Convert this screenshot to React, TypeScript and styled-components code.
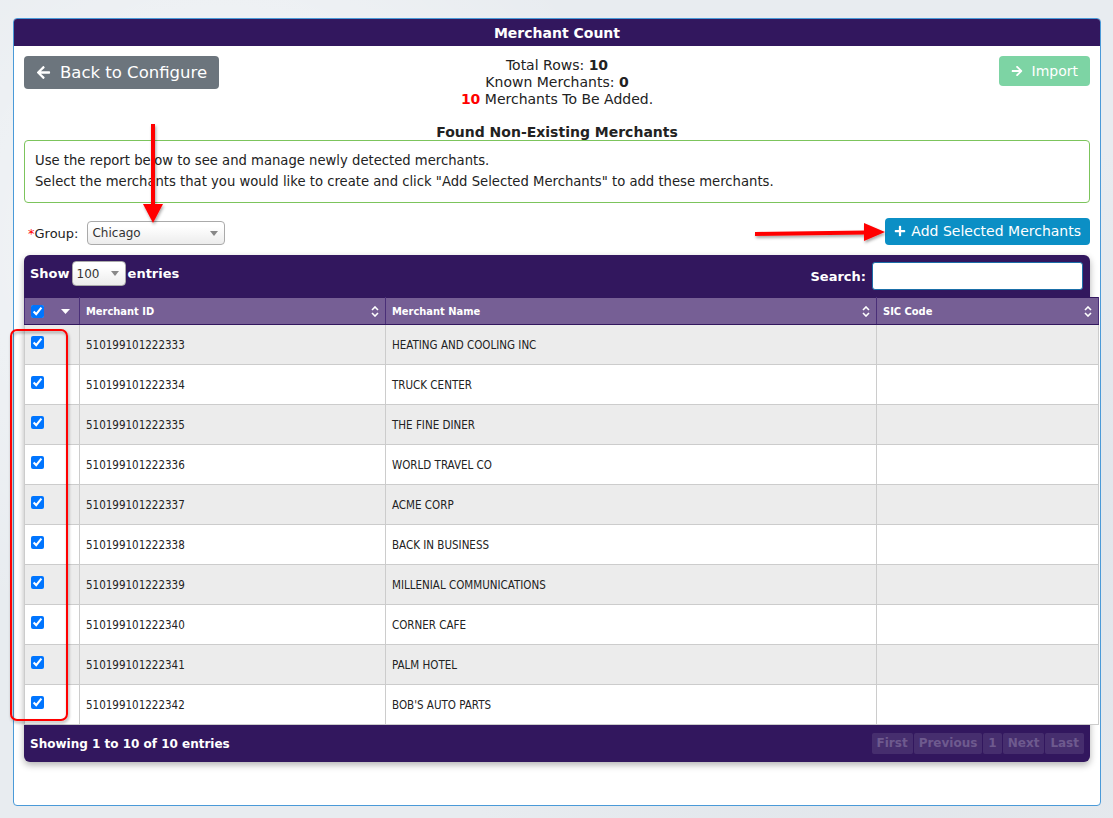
import React from 'react';
import styled, { createGlobalStyle } from 'styled-components';
import { FaArrowLeft, FaArrowRight, FaPlus } from 'react-icons/fa';

const GlobalStyle = createGlobalStyle`
  body {
    margin: 0;
    background-color: #e8ecf0;
    background-image:
      radial-gradient(circle at 20% 30%, rgba(255,255,255,0.6) 0, transparent 40%),
      radial-gradient(circle at 80% 70%, rgba(210,216,224,0.5) 0, transparent 45%);
    font-family: "DejaVu Sans", Verdana, sans-serif;
    color: #222;
  }
`;

const Page = styled.div`
  position: relative;
  padding: 18px 12px 13px 13px;
`;

const Panel = styled.div`
  background: #fff;
  border: 1px solid #4a9ad8;
  border-radius: 4px;
  overflow: hidden;
`;

const PanelHeader = styled.div`
  height: 27px;
  line-height: 28px;
  background: #32175e;
  color: #fff;
  font-weight: bold;
  font-size: 14px;
  text-align: center;
`;

const PanelBody = styled.div`
  padding: 10px 10px 43px 10px;
`;

const TopRow = styled.div`
  display: grid;
  grid-template-columns: 1fr auto 1fr;
  align-items: start;
`;

const Button = styled.button<{ $bg: string; $size: number; $h: number }>`
  display: inline-flex;
  align-items: center;
  gap: 9px;
  height: ${(p) => p.$h}px;
  padding: 0 12px;
  border: none;
  border-radius: 4px;
  background: ${(p) => p.$bg};
  color: #fff;
  font-family: "DejaVu Sans", Verdana, sans-serif;
  font-size: ${(p) => p.$size}px;
  cursor: pointer;
  white-space: nowrap;
`;

const Right = styled.div`
  display: flex;
  justify-content: flex-end;
`;

const Stats = styled.div`
  text-align: center;
  font-size: 14px;
  line-height: 17px;
  padding-top: 1px;
  color: #222;
`;

const Red = styled.b`
  color: #f00;
`;

const Title = styled.div`
  margin-top: 16px;
  text-align: center;
  font-weight: bold;
  font-size: 14px;
  line-height: 16px;
  color: #222;
`;

const InfoBox = styled.div`
  border: 1px solid #7cc45c;
  border-radius: 4px;
  padding: 9px 10px 10px 10px;
  font-size: 13.2px;
  line-height: 21px;
  color: #222;
`;

const Controls = styled.div`
  margin-top: 14px;
  display: flex;
  align-items: center;
  justify-content: space-between;
  height: 28px;
`;

const GroupField = styled.label`
  display: flex;
  align-items: center;
  gap: 9px;
  padding-left: 4px;
  margin-top: 4px;
  font-size: 13px;
`;

const Asterisk = styled.span`
  color: #f00;
`;

const SelectBox = styled.div<{ $w: number; $h: number }>`
  display: flex;
  align-items: center;
  justify-content: space-between;
  box-sizing: border-box;
  width: ${(p) => p.$w}px;
  height: ${(p) => p.$h}px;
  padding: 0 6px 0 4px;
  border: 1px solid #aaa;
  border-radius: 4px;
  background: linear-gradient(#fff 20%, #ececec 100%);
  font-size: 12px;
  font-weight: normal;
  color: #333;
`;

const Caret = styled.span`
  width: 0;
  height: 0;
  border-left: 4px solid transparent;
  border-right: 4px solid transparent;
  border-top: 5px solid #888;
`;

const TableWrap = styled.div`
  margin-top: 10px;
  background: #32175e;
  border-radius: 6px;
  box-shadow: 0 3px 7px rgba(0, 0, 0, 0.3);
`;

const Toolbar = styled.div`
  display: flex;
  justify-content: space-between;
  align-items: flex-start;
  height: 42px;
  padding: 6px 7px 0 6px;
  box-sizing: border-box;
  color: #fff;
  font-weight: bold;
  font-size: 13px;
`;

const ShowField = styled.div`
  display: flex;
  align-items: center;
  gap: 2px;
`;

const SearchField = styled.div`
  display: flex;
  align-items: center;
  gap: 6px;
  padding-top: 1px;
`;

const SearchInput = styled.input`
  width: 211px;
  height: 28px;
  box-sizing: border-box;
  border: 1px solid #1b6fa8;
  border-radius: 3px;
  background: #fff;
`;

const Table = styled.table`
  width: 1074px;
  border-collapse: collapse;
  table-layout: fixed;
  font-family: "DejaVu Sans Condensed", Tahoma, sans-serif;
  font-size: 11.5px;
  color: #222;
`;

const Th = styled.th<{ $w: number }>`
  width: ${(p) => p.$w}px;
  height: 27px;
  padding: 0 6px;
  box-sizing: border-box;
  background: #765f95;
  color: #fff;
  text-align: left;
  font-weight: bold;
  font-size: 11px;
  border-top: 1px solid #32175e;
  border-bottom: 1px solid #32175e;
  border-left: 1px solid #4a2f78;
  border-right: 1px solid #4a2f78;
`;

const ThInner = styled.div`
  display: flex;
  align-items: center;
  justify-content: space-between;
`;

const Tr = styled.tr<{ $odd: boolean }>`
  height: 40px;
  background: ${(p) => (p.$odd ? '#ececec' : '#fff')};
`;

const Td = styled.td`
  padding: 0 6px;
  border: 1px solid #ccc;
  vertical-align: middle;
`;

const CheckTd = styled(Td)`
  vertical-align: top;
  padding-top: 11px;
  padding-bottom: 0;
`;

const Check = styled.input`
  display: block;
  margin: 0;
  width: 13px;
  height: 13px;
  accent-color: #0075ff;
`;

const Footer = styled.div`
  display: flex;
  justify-content: space-between;
  align-items: center;
  height: 37px;
  padding: 0 6px;
  color: #fff;
  font-weight: bold;
  font-size: 12px;
`;

const Pager = styled.div`
  display: flex;
  gap: 1px;
`;

const PageBtn = styled.span`
  height: 21px;
  line-height: 21px;
  padding: 0 5px;
  background: rgba(255, 255, 255, 0.1);
  border-radius: 2px;
  color: #6e5a8e;
  font-weight: bold;
  font-size: 12px;
`;

const Overlay = styled.svg`
  position: absolute;
  left: 0;
  top: 0;
  pointer-events: none;
`;

const SortIcon = () => (
  <svg width="8" height="11" viewBox="0 0 8 11">
    <path d="M1 4 L4 1 L7 4" fill="none" stroke="#fff" strokeWidth="1.6" />
    <path d="M1 7 L4 10 L7 7" fill="none" stroke="#fff" strokeWidth="1.6" />
  </svg>
);

const rows = [
  ['510199101222333', 'HEATING AND COOLING INC'],
  ['510199101222334', 'TRUCK CENTER'],
  ['510199101222335', 'THE FINE DINER'],
  ['510199101222336', 'WORLD TRAVEL CO'],
  ['510199101222337', 'ACME CORP'],
  ['510199101222338', 'BACK IN BUSINESS'],
  ['510199101222339', 'MILLENIAL COMMUNICATIONS'],
  ['510199101222340', 'CORNER CAFE'],
  ['510199101222341', 'PALM HOTEL'],
  ['510199101222342', "BOB'S AUTO PARTS"],
];

export default function App() {
  return (
    <>
      <GlobalStyle />
      <Page>
        <Panel>
          <PanelHeader>Merchant Count</PanelHeader>
          <PanelBody>
            <TopRow>
              <div>
                <Button $bg="#6c757d" $size={16.5} $h={33}>
                  <FaArrowLeft size={15} /> Back to Configure
                </Button>
              </div>
              <Stats>
                Total Rows: <b>10</b>
                <br />
                Known Merchants: <b>0</b>
                <br />
                <Red>10</Red> Merchants To Be Added.
              </Stats>
              <Right>
                <Button $bg="#7dd4a4" $size={14} $h={30}>
                  <FaArrowRight size={12} /> Import
                </Button>
              </Right>
            </TopRow>
            <Title>Found Non-Existing Merchants</Title>
            <InfoBox>
              Use the report below to see and manage newly detected merchants.
              <br />
              Select the merchants that you would like to create and click "Add Selected Merchants" to add these merchants.
            </InfoBox>
            <Controls>
              <GroupField>
                <span>
                  <Asterisk>*</Asterisk>Group:
                </span>
                <SelectBox $w={138} $h={24}>
                  Chicago <Caret />
                </SelectBox>
              </GroupField>
              <Button $bg="#0b8fc5" $size={14} $h={27} style={{ gap: 5, padding: '0 9px' }}>
                <FaPlus size={12} /> Add Selected Merchants
              </Button>
            </Controls>
            <TableWrap>
              <Toolbar>
                <ShowField>
                  Show
                  <SelectBox $w={54} $h={25}>
                    100 <Caret />
                  </SelectBox>
                  entries
                </ShowField>
                <SearchField>
                  Search:
                  <SearchInput />
                </SearchField>
              </Toolbar>
              <Table>
                <thead>
                  <tr>
                    <Th $w={55}>
                      <ThInner>
                        <Check type="checkbox" defaultChecked />
                        <svg width="9" height="5" viewBox="0 0 9 5" style={{ marginRight: 3 }}>
                          <path d="M0 0 L9 0 L4.5 5 Z" fill="#fff" />
                        </svg>
                      </ThInner>
                    </Th>
                    <Th $w={306}>
                      <ThInner>
                        Merchant ID <SortIcon />
                      </ThInner>
                    </Th>
                    <Th $w={491}>
                      <ThInner>
                        Merchant Name <SortIcon />
                      </ThInner>
                    </Th>
                    <Th $w={222}>
                      <ThInner>
                        SIC Code <SortIcon />
                      </ThInner>
                    </Th>
                  </tr>
                </thead>
                <tbody>
                  {rows.map(([id, name], i) => (
                    <Tr key={id} $odd={i % 2 === 0}>
                      <CheckTd>
                        <Check type="checkbox" defaultChecked />
                      </CheckTd>
                      <Td>{id}</Td>
                      <Td>{name}</Td>
                      <Td />
                    </Tr>
                  ))}
                </tbody>
              </Table>
              <Footer>
                <span>Showing 1 to 10 of 10 entries</span>
                <Pager>
                  <PageBtn>First</PageBtn>
                  <PageBtn>Previous</PageBtn>
                  <PageBtn>1</PageBtn>
                  <PageBtn>Next</PageBtn>
                  <PageBtn>Last</PageBtn>
                </Pager>
              </Footer>
            </TableWrap>
          </PanelBody>
        </Panel>
        <Overlay width="1113" height="818">
          <defs>
            <filter id="sh" x="-20%" y="-20%" width="140%" height="140%">
              <feDropShadow dx="1" dy="2" stdDeviation="1.5" floodOpacity="0.35" />
            </filter>
          </defs>
          <g filter="url(#sh)">
            <rect x="151" y="124" width="4" height="82" fill="#f00" />
            <path d="M143 204 L163 204 L153 223 Z" fill="#f00" />
            <path d="M755 232 L866 230.5 L866 234.5 L755 236 Z" fill="#f00" />
            <path d="M864 223 L885 232 L864 241 Z" fill="#f00" />
            <rect x="11" y="330" width="56" height="390" rx="6" fill="none" stroke="#f00" strokeWidth="2" />
          </g>
        </Overlay>
      </Page>
    </>
  );
}
